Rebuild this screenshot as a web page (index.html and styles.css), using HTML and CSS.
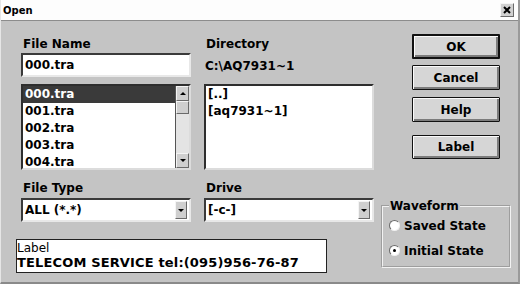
FILE: index.html
```html
<!DOCTYPE html>
<html lang="en">
<head>
  <meta charset="UTF-8">
  <title>Open</title>
  <link rel="stylesheet" href="styles.css">
</head>
<body>
  <div class="window">
    <!-- title bar -->
    <div class="titlebar">
      <span class="title">Open</span>
      <span class="close">
        <svg width="8" height="8" viewBox="0 0 8 8"><path d="M1 1L7 7M7 1L1 7" stroke="#000" stroke-width="2"/></svg>
      </span>
    </div>

    <div class="content">
      <div class="left">
        <div class="fields">
          <div class="col">
            <div class="label">File Name</div>
            <div class="edit">000.tra</div>
            <div class="listbox">
              <ul class="items">
                <li class="selected">000.tra</li>
                <li>001.tra</li>
                <li>002.tra</li>
                <li>003.tra</li>
                <li>004.tra</li>
              </ul>
              <div class="scrollbar">
                <span class="sb-btn"><span class="arrow-up"></span></span>
                <span class="sb-thumb"></span>
                <span class="sb-track"></span>
                <span class="sb-btn"><span class="arrow-down"></span></span>
              </div>
            </div>
            <div class="label lower">File Type</div>
            <div class="combo">
              <span class="combo-text">ALL (*.*)</span>
              <span class="drop"><span class="arrow-down"></span></span>
            </div>
          </div>
          <div class="col">
            <div class="label">Directory</div>
            <div class="path">C:\AQ7931~1</div>
            <div class="listbox">
              <ul class="items">
                <li>[..]</li>
                <li>[aq7931~1]</li>
              </ul>
            </div>
            <div class="label lower">Drive</div>
            <div class="combo">
              <span class="combo-text">[-c-]</span>
              <span class="drop"><span class="arrow-down"></span></span>
            </div>
          </div>
        </div>
        <div class="labelbox">
          <div class="lb-title">Label</div>
          <div class="lb-text">TELECOM SERVICE tel:(095)956-76-87</div>
        </div>
      </div>

      <div class="right">
        <div class="btn default">OK</div>
        <div class="btn cancel">Cancel</div>
        <div class="btn help">Help</div>
        <div class="btn label-btn">Label</div>
        <fieldset class="group">
          <legend>Waveform</legend>
          <div class="radio"><span class="circle"></span>Saved State</div>
          <div class="radio"><span class="circle checked"></span>Initial State</div>
        </fieldset>
      </div>
    </div>
  </div>
</body>
</html>
```

FILE: styles.css
```css
/* page */
body {
  margin: 0;
  padding: 0;
  font-family: 'DejaVu Sans', 'Liberation Sans', sans-serif;
  font-weight: bold;
  font-size: 12px;
  color: #000;
  background-color: #c4c4c4;
}

.window {
  width: 520px;
  height: 284px;
  box-sizing: border-box;
  background-color: #c4c4c4;
  border-right: 2px solid #9a9a9a;
  border-bottom: 2px solid #8a8a8a;
  border-left: 1px solid #e6e6e6;
}

/* title bar */
.titlebar {
  height: 20px;
  background-color: #fdfdfd;
  border-bottom: 1px solid #8c8c8c;
  display: flex;
  align-items: center;
  justify-content: space-between;
  padding: 0 4px 0 2px;
}

.title {
  font-size: 10px;
}

.close {
  width: 14px;
  height: 14px;
  box-sizing: border-box;
  background-color: #d0d0d0;
  border: 1px solid;
  border-color: #f4f4f4 #6a6a6a #6a6a6a #f4f4f4;
  display: flex;
  align-items: center;
  justify-content: center;
}

/* layout */
.content {
  display: flex;
}

.left {
  width: 358px;
  padding: 16px 0 0 15px;
}

.fields {
  display: flex;
  gap: 13px;
  padding-left: 5px;
}

.col {
  width: 170px;
  display: flex;
  flex-direction: column;
}

.label {
  height: 14px;
  line-height: 14px;
  margin-bottom: 2px;
  padding-left: 2px;
}

.label.lower {
  margin-top: 11px;
  margin-bottom: 3px;
}

/* edit field */
.edit {
  height: 24px;
  box-sizing: border-box;
  background-color: #fff;
  border: 2px solid;
  border-color: #3a3a3a #e8e8e8 #e8e8e8 #3a3a3a;
  padding-left: 2px;
  line-height: 20px;
}

.path {
  height: 24px;
  line-height: 26px;
  padding-left: 1px;
}

/* list boxes */
.listbox {
  margin-top: 7px;
  height: 86px;
  box-sizing: border-box;
  background-color: #fff;
  border: 2px solid;
  border-color: #2e2e2e #dcdcdc #dcdcdc #2e2e2e;
  display: flex;
}

.items {
  list-style: none;
  margin: 0;
  padding: 0;
  flex: 1;
}

.items li {
  height: 17px;
  line-height: 17px;
  padding-left: 2px;
}

.items li.selected {
  background-color: #3a3a3a;
  color: #fff;
}

.scrollbar {
  width: 13px;
  display: flex;
  flex-direction: column;
  border-left: 1px solid #555;
  background-color: #e4e4e4;
}

.sb-btn,
.sb-thumb {
  box-sizing: border-box;
  background-color: #cfcfcf;
  border: 1px solid;
  border-color: #f4f4f4 #6a6a6a #6a6a6a #f4f4f4;
  display: flex;
  align-items: center;
  justify-content: center;
}

.sb-btn {
  height: 15px;
}

.sb-thumb {
  height: 13px;
}

.sb-track {
  flex: 1;
}

.arrow-up {
  width: 0;
  height: 0;
  border-left: 3px solid transparent;
  border-right: 3px solid transparent;
  border-bottom: 3px solid #000;
}

.arrow-down {
  width: 0;
  height: 0;
  border-left: 3px solid transparent;
  border-right: 3px solid transparent;
  border-top: 3px solid #000;
}

/* combo boxes */
.combo {
  height: 24px;
  box-sizing: border-box;
  background-color: #fff;
  border: 2px solid;
  border-color: #3a3a3a #e8e8e8 #e8e8e8 #3a3a3a;
  display: flex;
  align-items: center;
  padding: 0 2px 0 2px;
}

.combo-text {
  flex: 1;
}

.drop {
  width: 12px;
  height: 18px;
  box-sizing: border-box;
  background-color: #cfcfcf;
  border: 1px solid;
  border-color: #f4f4f4 #6a6a6a #6a6a6a #f4f4f4;
  display: flex;
  align-items: center;
  justify-content: center;
}

/* label box at the bottom */
.labelbox {
  margin-top: 17px;
  width: 311px;
  height: 34px;
  box-sizing: border-box;
  background-color: #fff;
  border: 1px solid #222;
  padding-top: 1px;
}

.lb-title {
  font-weight: normal;
  line-height: 14px;
}

.lb-text {
  font-size: 13px;
  line-height: 16px;
  letter-spacing: 0.15px;
}

/* buttons */
.right {
  width: 130px;
  margin-left: 7px;
  padding-top: 13px;
  display: flex;
  flex-direction: column;
}

.btn {
  width: 88px;
  height: 25px;
  margin-left: 31px;
  box-sizing: border-box;
  background-color: #d6d6d6;
  border: 1px solid #111;
  box-shadow: inset 1px 1px #fafafa, inset -2px -2px #7c7c7c;
  display: flex;
  align-items: center;
  justify-content: center;
  border-radius: 1px;
}

.btn.default {
  border-width: 2px;
}

.btn.cancel {
  margin-top: 6px;
}

.btn.help {
  margin-top: 7px;
}

.btn.label-btn {
  margin-top: 13px;
  height: 24px;
}

/* waveform group */
.group {
  margin: 40px 0 0 0;
  padding: 0 0 0 6px;
  height: 69px;
  box-sizing: border-box;
  border: 2px groove #f2f2f2;
}

.group legend {
  padding: 0 1px;
  line-height: 14px;
}

.radio {
  height: 25px;
  display: flex;
  align-items: center;
  gap: 4px;
}

.circle {
  width: 11px;
  height: 11px;
  box-sizing: border-box;
  border-radius: 50%;
  background-color: #fff;
  border: 1px solid;
  border-color: #6a6a6a #f0f0f0 #f0f0f0 #6a6a6a;
  display: flex;
  align-items: center;
  justify-content: center;
}

.circle.checked::after {
  content: '';
  width: 3px;
  height: 3px;
  border-radius: 50%;
  background-color: #000;
}
```
